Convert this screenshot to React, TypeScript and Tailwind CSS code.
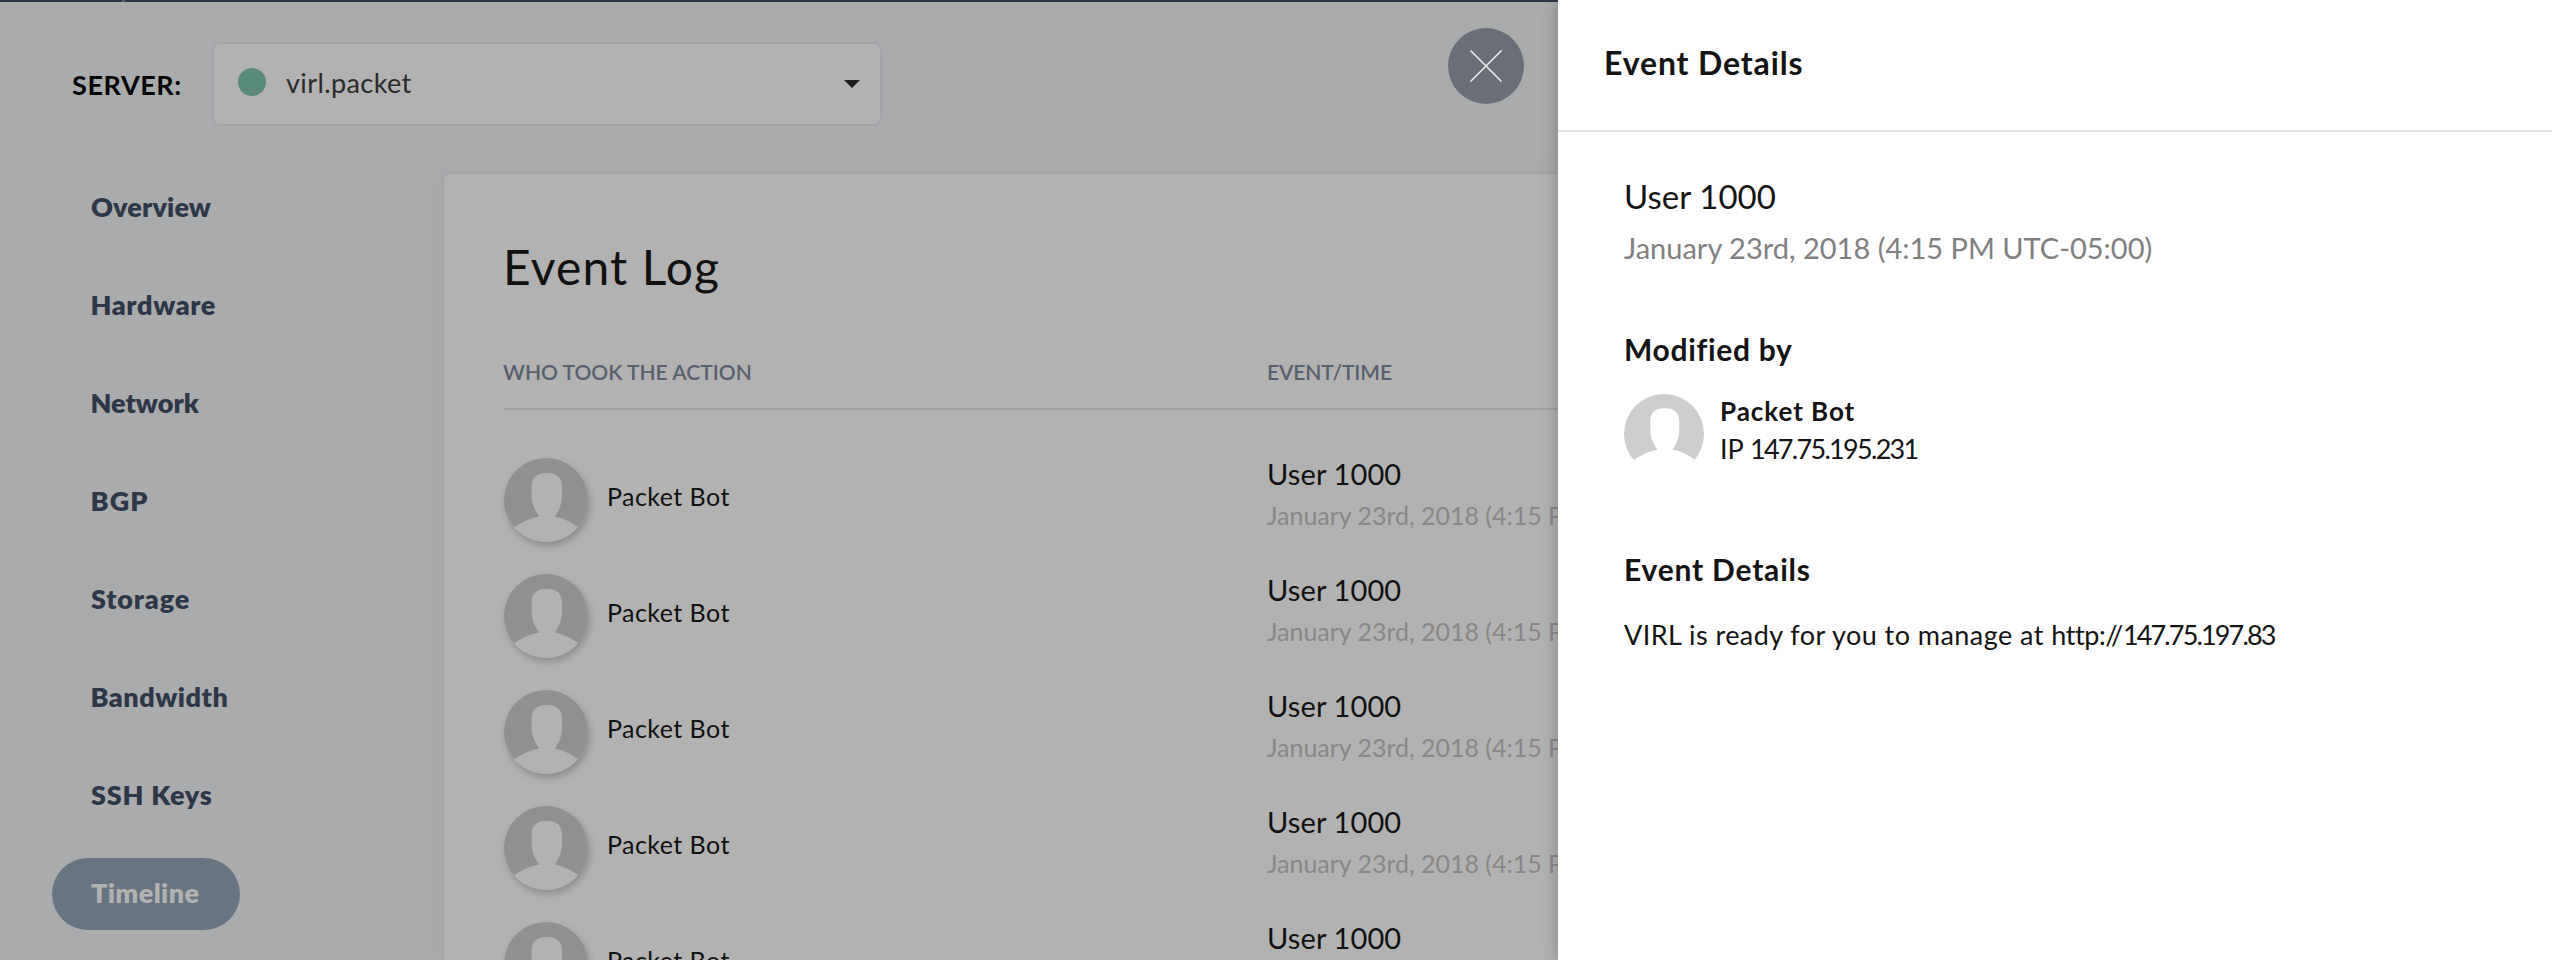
type NavItem = { label: string; className: string };

const navItems: NavItem[] = [
  { label: "Overview", className: "pl-[39px] tracking-[0.12px]" },
  { label: "Hardware", className: "pl-[38.5px] tracking-[0.6px]" },
  { label: "Network", className: "pl-[38.5px] tracking-[0.02px]" },
  { label: "BGP", className: "pl-[38.5px] tracking-[1.1px]" },
  { label: "Storage", className: "pl-[39px] tracking-[0.85px]" },
  { label: "Bandwidth", className: "pl-[38.5px] tracking-[0.5px]" },
  { label: "SSH Keys", className: "pl-[39px] tracking-[0.75px]" },
  { label: "Timeline", className: "pl-[39px] tracking-[0.4px]" },
];

const EVENT_DATE = "January 23rd, 2018 (4:15 PM UTC-05:00)";

const events = Array.from({ length: 5 }, (_, id) => ({
  id,
  user: "Packet Bot",
  title: "User 1000",
  date: EVENT_DATE,
}));

function Avatar({ className, background, body }: { className: string; background: string; body: string }) {
  return (
    <svg viewBox="0 0 84 84" className={`shrink-0 overflow-hidden rounded-full ${className}`} aria-hidden="true">
      <rect width="84" height="70" className={background} />
      <path
        className={body}
        d="M10.5 69 C18 64.5 26 60 35.3 58.6 C31 52.5 27.6 46 27.6 38 V28 C27.6 19.5 33 15 42.8 15 C52.6 15 58 19.5 58 28 V38 C58 46 55 52.5 50.8 58.4 C59 60 67 64 74.3 68.7 L84 75 V84 H0 V75 Z"
      />
    </svg>
  );
}

function Sidebar() {
  return (
    <nav className="flex w-[442px] shrink-0 flex-col items-start gap-[26px] pl-[52px]">
      {navItems.map((item) => (
        <a
          key={item.label}
          className={`flex h-[72px] w-[188px] shrink-0 items-center rounded-full pb-[2px] text-[27px] font-extrabold whitespace-nowrap ${item.className} ${
            item.label === "Timeline" ? "bg-[#687481] text-[#b2b2b2]" : "text-[#2d3747]"
          }`}
        >
          {item.label}
        </a>
      ))}
    </nav>
  );
}

function ServerPicker() {
  return (
    <div className="mt-10 flex h-[84px] shrink-0 items-center pl-[72px]">
      <span className="w-[140px] shrink-0 pt-0.5 text-[27px] font-bold tracking-[0.6px] text-black">SERVER:</span>
      <div className="flex h-[84px] w-[670px] items-center rounded-lg border-2 border-[#a3a3a9] bg-[#b2b2b2] pr-5 pl-6">
        <span className="mb-1 size-7 rounded-full bg-[#5a8a79]" />
        <span className="ml-5 pb-[2px] text-[27px] tracking-[0.4px] text-[#2a2a2a]">virl.packet</span>
        <svg viewBox="0 0 16 8" className="ml-auto h-2 w-4" aria-hidden="true">
          <path d="M0 0H16L8 8Z" className="fill-[#1f1f1f]" />
        </svg>
      </div>
    </div>
  );
}

function EventLog() {
  return (
    <main className="min-w-0 flex-1 rounded-tl-lg border-t-2 border-l-2 border-[#a3a3a9] bg-[#b2b2b2] pt-[63px] pl-[60px] shadow-[0_0_12px_rgba(168,164,160,0.55)]">
      <h1 className="-ml-px text-[48px] leading-[60px] tracking-[1.13px] text-[#111]">Event Log</h1>
      <div className="mt-[61px] grid grid-cols-[763px_1fr] border-b-2 border-[#9f9f9f] pb-[22px] text-[21px] leading-7 font-semibold text-[#58606d]">
        <span className="-ml-px tracking-[0px]">WHO TOOK THE ACTION</span>
        <span className="tracking-[-0.1px]">EVENT/TIME</span>
      </div>
      <div className="flex flex-col gap-8 pt-12">
        {events.map((event) => (
          <div key={event.id} className="grid h-[84px] grid-cols-[767px_1fr]">
            <div className="flex items-center gap-[19px]">
              <Avatar
                className="size-[84px] shadow-[2px_4px_7px_rgba(0,0,0,0.22)]"
                background="fill-[#909090]"
                body="fill-[#b2b2b2]"
              />
              <span className="pb-1.5 text-[25px] tracking-[0.45px] text-[#111]">{event.user}</span>
            </div>
            <div className="-mt-1 -ml-1 whitespace-nowrap">
              <div className="text-[29px] leading-10 tracking-[0.13px] text-[#111]">{event.title}</div>
              <div className="mt-px text-[25px] leading-10 tracking-[-0.02px] text-[#878787]">{event.date}</div>
            </div>
          </div>
        ))}
      </div>
    </main>
  );
}

function EventDrawer() {
  return (
    <aside className="z-10 flex min-w-0 flex-1 flex-col bg-white text-[#141414] shadow-[0_0_16px_rgba(0,0,0,0.25)]">
      <header className="h-[132px] border-b-2 border-[#e3e3e3] pt-[43px] pl-[46px]">
        <h2 className="text-[32px] leading-10 font-bold tracking-[0.87px]">Event Details</h2>
      </header>
      <div className="pt-11 pl-[66px]">
        <div className="text-[33px] leading-10 tracking-[0.05px]">User 1000</div>
        <div className="mt-3 text-[29px] leading-10 text-[#808080]">{EVENT_DATE}</div>
        <h3 className="mt-[61px] text-[30px] leading-10 font-bold tracking-[0.7px]">Modified by</h3>
        <div className="mt-[25px] flex h-20 gap-4">
          <Avatar className="size-20" background="fill-[#cecece]" body="fill-white" />
          <div className="-mt-0.5 leading-[38px]">
            <div className="text-[26px] font-bold tracking-[0.95px]">Packet Bot</div>
            <div className="text-[27px]">
              IP <span className="tracking-[-1.7px]">147.75.195.231</span>
            </div>
          </div>
        </div>
        <h3 className="mt-[75px] text-[30px] leading-10 font-bold tracking-[0.8px]">Event Details</h3>
        <p className="mt-[26px] text-[27px] leading-10 tracking-[0.45px]">
          VIRL is ready for you to manage at <span className="tracking-[-0.4px]">http://</span>
          <span className="tracking-[-1.85px]">147.75.197.83</span>
        </p>
      </div>
    </aside>
  );
}

export default function App() {
  return (
    <div className="relative flex h-[960px] w-full overflow-hidden bg-[#a9abad] font-['Lato',sans-serif]">
      <div className="flex w-[1558px] shrink-0 flex-col overflow-hidden">
        <div className="h-0.5 shrink-0 bg-[#2d3746]">
          <div className="ml-[122px] h-0.5 w-[3px] -skew-x-12 bg-[#56606c]" />
        </div>
        <ServerPicker />
        <div className="mt-[46px] flex min-h-0 flex-1">
          <Sidebar />
          <EventLog />
        </div>
      </div>
      <button
        type="button"
        aria-label="Close"
        className="absolute top-7 left-[1448px] flex size-[76px] items-center justify-center rounded-full bg-[#6a6e77]"
      >
        <svg viewBox="0 0 32 32" className="size-8" aria-hidden="true">
          <path d="M0.5 0.5L31.5 31.5M31.5 0.5L0.5 31.5" className="stroke-[#f0f0f0] stroke-[1.5px]" />
        </svg>
      </button>
      <EventDrawer />
    </div>
  );
}
